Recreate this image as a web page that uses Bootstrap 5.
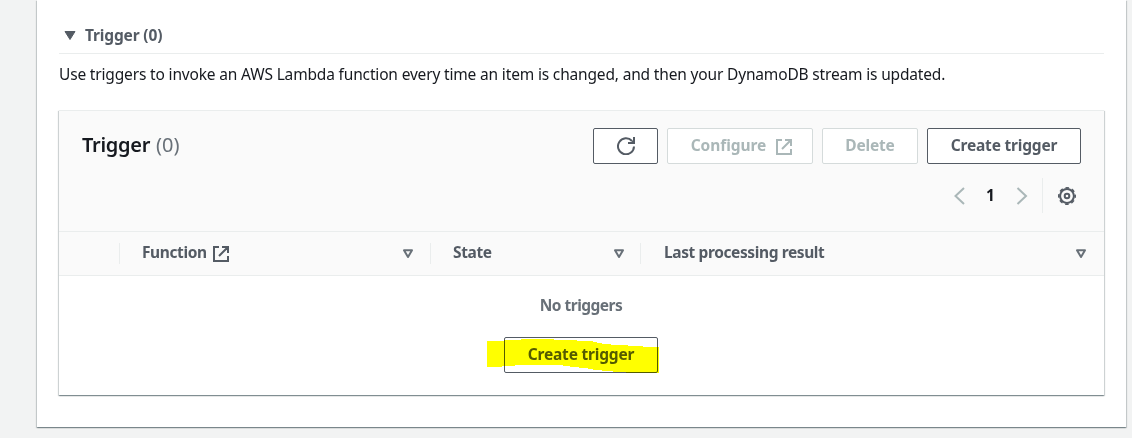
<!DOCTYPE html>
<html lang="en">
<head>
<meta charset="utf-8">
<meta name="viewport" content="width=device-width, initial-scale=1">
<title>Trigger</title>
<link href="https://cdn.jsdelivr.net/npm/bootstrap@5.3.0/dist/css/bootstrap.min.css" rel="stylesheet">
<style>
body{background:#f2f3f3;font-family:"Noto Sans","Open Sans",sans-serif;font-size:15.5px;line-height:22px;color:#16191f;height:438px;overflow:hidden}
svg{display:block;flex:none}
.panel{background:#fff;box-shadow:0 1px 1px 0 rgba(0,28,36,.3),1px 1px 1px 0 rgba(0,28,36,.15),-1px 1px 1px 0 rgba(0,28,36,.15)}
.outer{margin:0 6px 0 37px;height:427px;padding:0 22px}
.toggle-row{height:54px;padding:17px 0 0 5px;border-bottom:1px solid #eaeded;color:#545b64}
.toggle-row svg{margin-top:12px}
.toggle-row span{margin:7px 0 0 9px;letter-spacing:-.15px}
.intro{height:56px;padding-top:9px;letter-spacing:-.165px}
.bold{font-weight:700}
.inner{height:285px;border-top:1px solid #eaeded}
.head{background:#fafafa;height:121px;border-bottom:1px solid #eaeded;padding:17px 23px 0}
.title{font-size:20px;font-weight:600;line-height:22px;padding-top:6px;letter-spacing:-.3px}
.title span{font-weight:400;color:#687078;letter-spacing:0;margin-left:1px}
.aws-btn{height:36px;border:1px solid #545b64;border-radius:2px;background:#fff;color:#545b64;padding:0 0 2px;font-size:15.5px;line-height:20px;font-weight:700;letter-spacing:-.2px;display:flex;align-items:center;justify-content:center}
.aws-btn:disabled{color:#aab7b8;border-color:#d5dbdb;background:#fff;opacity:1}
.btn-refresh{width:65px;padding-bottom:0}
.btn-configure{width:146px;letter-spacing:-.05px;padding-left:4px}
.btn-configure svg{margin:2px 0 0 10px}
.btn-delete{width:96px}
.btn-create{width:154px}
.tools{gap:9px}
.pager{height:35px;margin-top:14px}
.pager .page-no{width:50px;padding:0 1px 2px 0}
.vline{width:1px;background:#eaeded}
.cols{height:44px;background:#fafafa;border-bottom:1px solid #eaeded;color:#545b64;letter-spacing:-.39px}
.cols .vline{height:21px}
.cell{padding:0 17px 0 22px}
.cell>span{margin-top:-3px}
.empty{padding:18px 1px 0 0;color:#687078;letter-spacing:-.5px}
.hl{position:absolute;left:-17px;top:0;mix-blend-mode:multiply;pointer-events:none}
</style>
</head>
<body>
<svg class="d-none">
  <symbol id="external" viewBox="0 0 17 17"><path fill="none" stroke="currentColor" stroke-width="2" d="M6 2H1v14h14v-5M9 2h6v6M15 2L6 11"/></symbol>
  <symbol id="sort" viewBox="0 0 12 11"><path d="M2 2.300h8L6 9z" fill="none" stroke="#687078" stroke-width="2" stroke-linejoin="round"/></symbol>
</svg>
<main class="panel outer">
  <div class="toggle-row d-flex align-items-start">
    <svg width="12" height="14" viewBox="0 0 12 14"><path d="M1 2.500h10L6 10.500z" fill="#545b64" stroke="#545b64" stroke-linejoin="round"/></svg>
    <span class="bold">Trigger (0)</span>
  </div>
  <div class="intro text-nowrap">Use triggers to invoke an AWS Lambda function every time an item is changed, and then your DynamoDB stream is updated.</div>
  <section class="panel inner">
    <div class="head">
      <div class="d-flex justify-content-between">
        <h2 class="title mb-0">Trigger <span>(0)</span></h2>
        <div class="tools d-flex">
          <button class="btn aws-btn btn-refresh" aria-label="Refresh"><svg width="18" height="18" viewBox="0 0 18 18"><path d="M17 9.500A8 8 0 1 1 15 4" fill="none" stroke="#545b64" stroke-width="2"/><path d="M18 0v7h-7V5h3.500L16 3V0z" fill="#545b64"/></svg></button>
          <button class="btn aws-btn btn-configure" disabled>Configure<svg width="17" height="17"><use href="#external"/></svg></button>
          <button class="btn aws-btn btn-delete" disabled>Delete</button>
          <button class="btn aws-btn btn-create">Create trigger</button>
        </div>
      </div>
      <div class="pager d-flex justify-content-end align-items-center">
        <svg width="12" height="18" viewBox="0 0 12 18" fill="none" stroke="#aab7b8" stroke-width="2"><path d="M10 1L1.500 9l8.500 8"/></svg>
        <span class="bold text-center page-no">1</span>
        <svg width="12" height="18" viewBox="0 0 12 18" fill="none" stroke="#aab7b8" stroke-width="2"><path d="M1.500 1L10 9l-8.500 8"/></svg>
        <span class="vline align-self-stretch" style="margin:0 15px 0 14px"></span>
        <svg width="18" height="18" viewBox="-9 -9 18 18" style="margin-right:5px" fill="none" stroke="#545b64"><circle r="6.900" stroke-width="2"/><circle r="8.200" stroke-width="1.600" stroke-dasharray="3.600 2.840" stroke-dashoffset="1.800"/><circle r="2.300" stroke-width="2"/></svg>
      </div>
    </div>
    <div class="cols bold d-flex align-items-center">
      <span style="width:60px"></span><span class="vline"></span>
      <div class="cell d-flex align-items-center" style="width:310px;padding-right:16px"><span>Function</span><svg style="margin-left:6px" width="17" height="17"><use href="#external"/></svg><svg class="ms-auto" width="12" height="11"><use href="#sort"/></svg></div>
      <span class="vline"></span>
      <div class="cell d-flex align-items-center" style="width:209px;padding-right:15px"><span>State</span><svg class="ms-auto" width="12" height="11"><use href="#sort"/></svg></div>
      <span class="vline"></span>
      <div class="cell d-flex align-items-center flex-grow-1" style="padding-left:23px"><span>Last processing result</span><svg class="ms-auto" width="12" height="11"><use href="#sort"/></svg></div>
    </div>
    <div class="empty d-flex flex-column align-items-center">
      <span class="bold">No triggers</span>
      <div class="position-relative" style="margin-top:21px">
        <button class="btn aws-btn btn-create">Create trigger</button>
        <svg class="hl" width="173" height="37" viewBox="0 0 173 37"><path d="M0 4h17v-1h17V2h33v1h23v1h16v1h4v1h5v1h9v1h17v1h15v1h16v26h-33v-1h-13v-1h-11v-1h-9v-1h-5v-1h-9v-1h-9v-1H76v-1H28v1H15v1H0z" fill="#ff0"/></svg>
      </div>
    </div>
  </section>
</main>
<script src="https://cdn.jsdelivr.net/npm/bootstrap@5.3.0/dist/js/bootstrap.bundle.min.js"></script>
</body>
</html>
